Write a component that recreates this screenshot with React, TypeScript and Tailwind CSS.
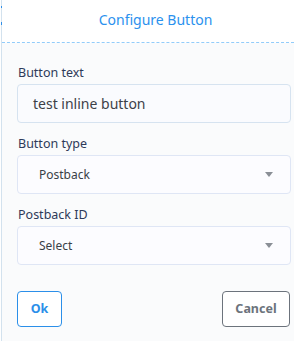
function Caret() {
  return (
      <svg width="8" height="5" viewBox="0 0 8 5" className="shrink-0">
        <path d="M0 0h8L4 5z" fill="#8a8f96"/>
      </svg>
  );
}

function Field({label, children}: { label: string; children: React.ReactNode }) {
  return (
      <div className="flex flex-col">
        <label className="text-[12.5px] leading-4 text-[#2e3a59] mb-[3px] pl-px">{label}</label>
        {children}
      </div>
  );
}

function SelectBox({value}: { value: string }) {
  return (
      <div
          className="h-[39px] flex items-center justify-between pl-[21px] pr-[17px] rounded border border-[#dfe6f5] bg-[#fcfcff] text-[12px] text-[#3a3f47]">
        <span>{value}</span>
        <Caret/>
      </div>
  );
}

export default function App() {
  return (
      <div className="w-[294px] h-[341px] flex bg-white font-['Noto_Sans',sans-serif] overflow-hidden">
        <div className="w-px ml-px relative bg-[#d3e2ee]">
          <span className="absolute left-0 top-[6px] w-px h-[2px] bg-[#2f8fe8]"/>
          <span className="absolute left-0 top-[22px] w-px h-[3px] bg-[#2f8fe8]"/>
        </div>
        <div className="flex-1 flex flex-col">
          <div className="h-[42px] flex items-center justify-center pb-[4px] bg-white">
            <h1 className="text-[14px] text-[#2b91ee] pl-[15px]">Configure Button</h1>
          </div>
          <div className="border-t border-dashed border-[#92ccfa]"/>
          <div className="flex-1 bg-[#fafbfc] pl-[15px] pr-[3px] pt-[22px] flex flex-col">
            <Field label="Button text">
              <div
                  className="h-[39px] flex items-center px-[15px] rounded border border-[#d6e3f0] bg-[#fafbfe] text-[14px] text-[#3d4148]">
                test inline button
              </div>
            </Field>
            <div className="h-[13px]"/>
            <Field label="Button type">
              <SelectBox value="Postback"/>
            </Field>
            <div className="h-[13px]"/>
            <Field label="Postback ID">
              <SelectBox value="Select"/>
            </Field>
            <div className="flex justify-between mt-[26px] pr-px">
              <button
                  className="w-[45px] h-[36px] rounded border border-[#2b8fe9] text-[#2b8fe9] text-[12.5px] font-bold bg-white">
                Ok
              </button>
              <button
                  className="w-[68px] h-[36px] rounded border border-[#6c737c] text-[#6c737c] text-[12.5px] font-bold bg-white">
                Cancel
              </button>
            </div>
          </div>
        </div>
      </div>
  );
}
